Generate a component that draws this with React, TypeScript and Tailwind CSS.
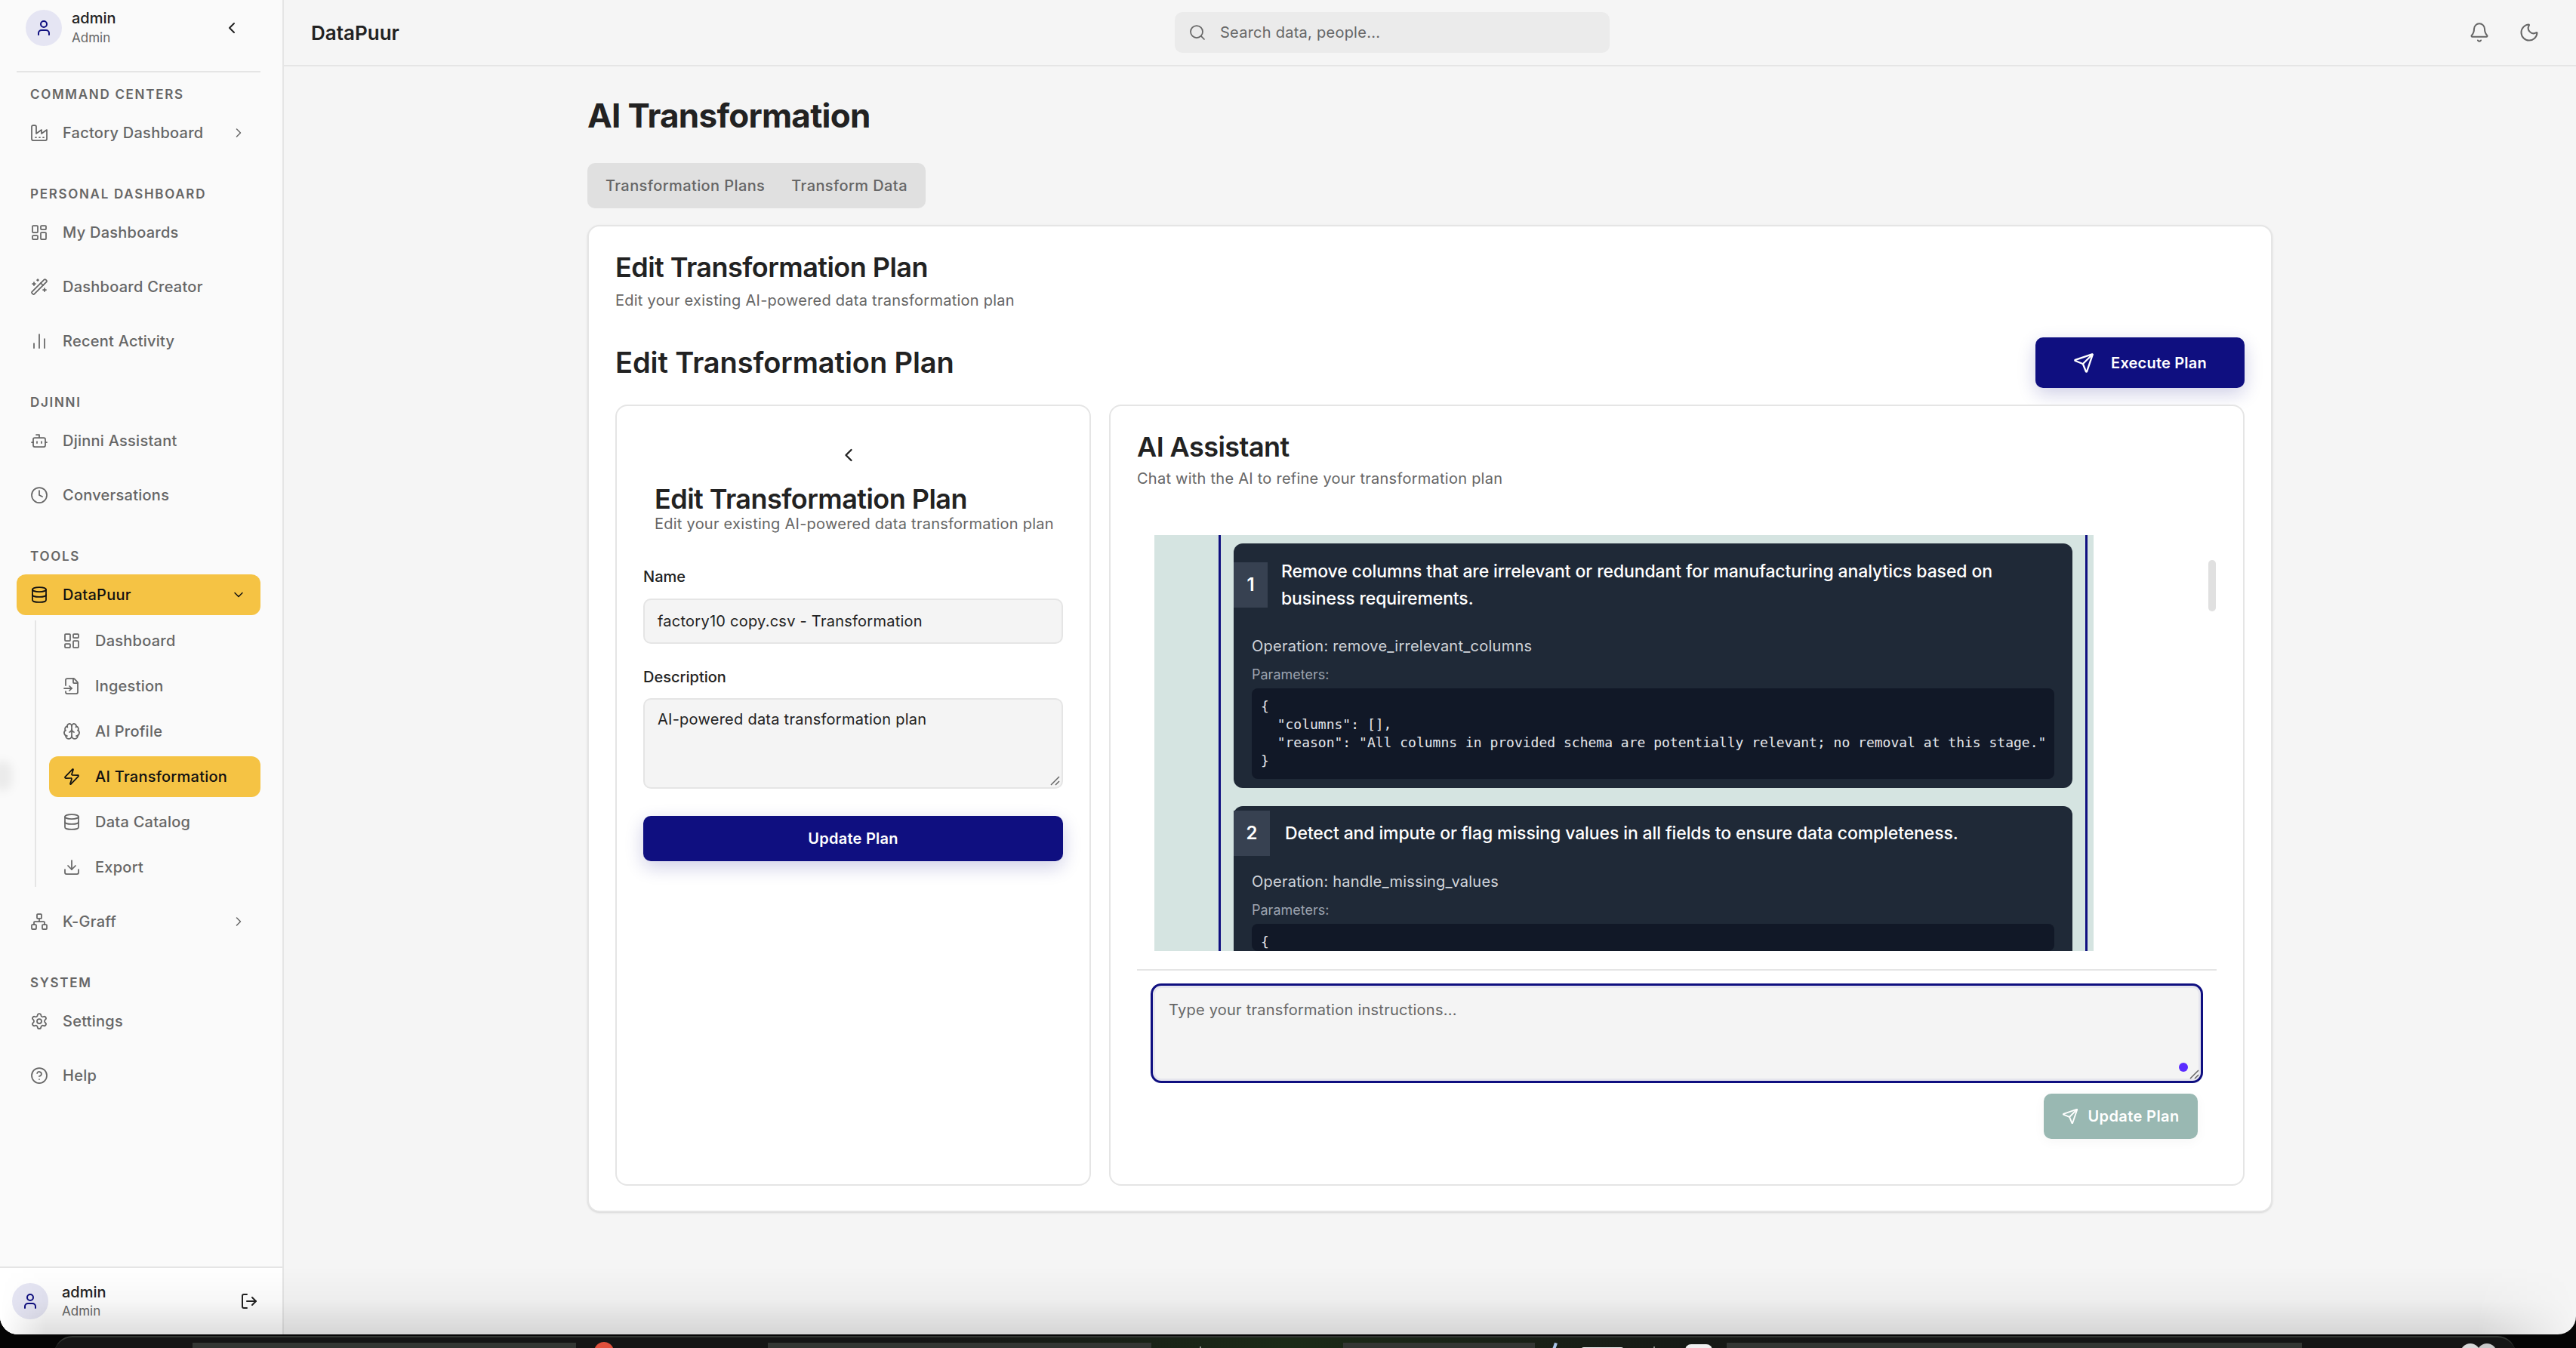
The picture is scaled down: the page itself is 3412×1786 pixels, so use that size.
import type { ElementType } from "react";
import {
  Bell,
  Bot,
  Brain,
  ChartNoAxesColumn,
  ChevronDown,
  ChevronLeft,
  ChevronRight,
  CircleHelp,
  Clock,
  Database,
  Download,
  FileInput,
  LayoutDashboard,
  LogOut,
  Moon,
  Network,
  Search,
  Send,
  Settings,
  User,
  WandSparkles,
  Zap,
} from "lucide-react";

// the zig-zag factory with dashes along the base
function FactoryIcon({ size = 24, strokeWidth = 2, className }: { size?: number; strokeWidth?: number; className?: string }) {
  return (
    <svg
      width={size}
      height={size}
      viewBox="0 0 24 24"
      fill="none"
      stroke="currentColor"
      strokeWidth={strokeWidth}
      strokeLinecap="round"
      strokeLinejoin="round"
      className={className}
    >
      <path d="M2 20a2 2 0 0 0 2 2h16a2 2 0 0 0 2-2V8l-7 5V8l-7 5V4a2 2 0 0 0-2-2H4a2 2 0 0 0-2 2Z" />
      <path d="M17 18h1" />
      <path d="M12 18h1" />
      <path d="M7 18h1" />
    </svg>
  );
}

function Resizer() {
  return (
    <svg className="absolute right-[1px] bottom-[1px]" width="16" height="16" viewBox="0 0 16 16" fill="none" stroke="#666666" strokeWidth="1.5">
      <path d="M14 3 3 14M14 9l-5 5" />
    </svg>
  );
}

function SectionLabel({ children }: { children: string }) {
  return (
    <div className="h-[24px] px-[40px] pt-[3px] flex items-center text-[17px] font-semibold tracking-[0.1em] text-[#666666] uppercase">
      {children}
    </div>
  );
}

function NavItem({
  icon: Icon,
  label,
  chevron,
}: {
  icon: ElementType;
  label: string;
  chevron?: boolean;
}) {
  return (
    <div className="h-[48px] pl-[40px] pr-[48px] flex items-center text-[#666666]">
      <Icon size={24} strokeWidth={1.75} className="shrink-0" />
      <span className="ml-[19px] text-[20px] tracking-[0.0125em] font-medium flex-1">{label}</span>
      {chevron && <ChevronRight size={20} strokeWidth={1.75} />}
    </div>
  );
}

function SubItem({ icon: Icon, label, active }: { icon: ElementType; label: string; active?: boolean }) {
  return (
    <div
      className={`h-[54px] mt-[6px] first:mt-0 pl-[18px] flex items-center rounded-[12px] ${
        active ? "bg-[#f5c344] text-[#111111]" : "text-[#666666]"
      }`}
    >
      <Icon size={24} strokeWidth={1.75} className="shrink-0" />
      <span className="ml-[19px] text-[20px] tracking-[0.0125em] font-medium">{label}</span>
    </div>
  );
}

function Sidebar() {
  return (
    <aside className="w-[376px] shrink-0 bg-[#fafafa] border-r-2 border-[#e5e5e5] flex flex-col">
      <div className="ml-[22px] mr-[29px] h-[96px] pl-[12px] pr-[26px] pb-[20px] flex items-center border-b-2 border-[#e5e5e5]">
        <div className="w-[48px] h-[48px] rounded-full bg-[#e5e5f3] flex items-center justify-center">
          <User size={24} strokeWidth={2} className="text-[#0f0f80]" />
        </div>
        <div className="ml-[13px] flex-1">
          <div className="text-[20px] leading-[26px] font-medium text-[#222222]">admin</div>
          <div className="text-[17px] leading-[26px] text-[#666666]">Admin</div>
        </div>
        <ChevronLeft size={24} strokeWidth={2} className="text-[#222222]" />
      </div>

      <div className="flex-1 pt-[16px]">
        <SectionLabel>Command Centers</SectionLabel>
        <div className="mt-[16px]">
          <NavItem icon={FactoryIcon} label="Factory Dashboard" chevron />
        </div>

        <div className="mt-[44px]">
          <SectionLabel>Personal Dashboard</SectionLabel>
        </div>
        <div className="mt-[16px] flex flex-col gap-[24px]">
          <NavItem icon={LayoutDashboard} label="My Dashboards" />
          <NavItem icon={WandSparkles} label="Dashboard Creator" />
          <NavItem icon={ChartNoAxesColumn} label="Recent Activity" />
        </div>

        <div className="mt-[44px]">
          <SectionLabel>Djinni</SectionLabel>
        </div>
        <div className="mt-[16px] flex flex-col gap-[24px]">
          <NavItem icon={Bot} label="Djinni Assistant" />
          <NavItem icon={Clock} label="Conversations" />
        </div>

        <div className="mt-[44px]">
          <SectionLabel>Tools</SectionLabel>
        </div>
        <div className="ml-[22px] mr-[29px] mt-[13px] h-[54px] pl-[18px] pr-[19px] flex items-center rounded-[12px] bg-[#f5c344] text-[#111111]">
          <Database size={24} strokeWidth={1.75} className="shrink-0" />
          <span className="ml-[19px] text-[20px] tracking-[0.0125em] font-medium flex-1">DataPuur</span>
          <ChevronDown size={20} strokeWidth={1.75} />
        </div>
        <div className="ml-[46px] mr-[29px] mt-[7px] h-[353px] border-l-2 border-[#e5e5e5] pl-[17px]">
          <SubItem icon={LayoutDashboard} label="Dashboard" />
          <SubItem icon={FileInput} label="Ingestion" />
          <SubItem icon={Brain} label="AI Profile" />
          <SubItem icon={Zap} label="AI Transformation" active />
          <SubItem icon={Database} label="Data Catalog" />
          <SubItem icon={Download} label="Export" />
        </div>
        <div className="mt-[22px]">
          <NavItem icon={Network} label="K-Graff" chevron />
        </div>

        <div className="mt-[44px]">
          <SectionLabel>System</SectionLabel>
        </div>
        <div className="mt-[16px] flex flex-col gap-[24px]">
          <NavItem icon={Settings} label="Settings" />
          <NavItem icon={CircleHelp} label="Help" />
        </div>
      </div>

      <div className="h-[90px] border-t-2 border-[#e5e5e5] bg-white pl-[16px] pr-[32px] flex items-center">
        <div className="w-[48px] h-[48px] rounded-full bg-[#e5e5f3] flex items-center justify-center">
          <User size={24} strokeWidth={2} className="text-[#0f0f80]" />
        </div>
        <div className="ml-[18px] flex-1">
          <div className="text-[20px] leading-[26px] font-medium text-[#222222]">admin</div>
          <div className="text-[17px] leading-[24px] text-[#666666]">Admin</div>
        </div>
        <LogOut size={24} strokeWidth={2} className="text-[#222222]" />
      </div>
    </aside>
  );
}

function Header() {
  return (
    <header className="h-[88px] shrink-0 border-b-2 border-[#e5e5e5] pl-[36px] pr-[48px] flex items-center relative">
      <div className="w-[1144px] shrink-0 text-[26px] font-semibold text-[#222222]">DataPuur</div>
      <div className="w-[576px] h-[54px] rounded-[10px] bg-[#ebebeb] pl-[18px] flex items-center text-[#666666]">
        <Search size={24} strokeWidth={1.75} />
        <span className="ml-[18px] text-[20px] tracking-[0.0125em]">Search data, people...</span>
      </div>
      <div className="ml-auto flex items-center gap-[38px] text-[#666666]">
        <Bell size={28} strokeWidth={1.75} />
        <Moon size={28} strokeWidth={1.75} />
      </div>
    </header>
  );
}

function StepCard({
  n,
  title,
  operation,
  code,
  numWidth,
  headerPad,
  codeHeight,
  titleGap,
}: {
  n: number;
  title: string;
  operation: string;
  code: string;
  numWidth: string;
  headerPad: string;
  codeHeight: string;
  titleGap: string;
}) {
  return (
    <div className="rounded-[12px] bg-[#1f2937] px-[24px] pb-[12px] shrink-0">
      <div className={`flex items-center -ml-[24px] ${headerPad}`}>
        <div className={`${numWidth} h-[60px] bg-[#374151] flex items-center justify-center text-[24px] font-semibold text-white shrink-0`}>
          {n}
        </div>
        <div className={`${titleGap} text-[23px] leading-[36px] tracking-[-0.005em] font-medium text-white`}>{title}</div>
      </div>
      <div className="text-[20px] leading-[28px] tracking-[0.0125em] text-[#d1d5db]">Operation: {operation}</div>
      <div className="mt-[12px] text-[18px] leading-[24px] text-[#9ca3af]">Parameters:</div>
      <pre className={`mt-[6px] rounded-[8px] bg-[#111827] p-[12px] text-[18px] leading-[24px] text-[#e5e7eb] font-['DejaVu_Sans_Mono',monospace] ${codeHeight}`}>
        {code}
      </pre>
    </div>
  );
}

function ChatPanel() {
  return (
    <div className="ml-[24px] flex-1 rounded-[16px] border-2 border-[#e5e5e5] bg-white flex flex-col">
      <div className="pl-[35px] pt-[31px]">
        <div className="text-[36px] leading-[46px] font-semibold tracking-[-0.015em] text-[#222222]">AI Assistant</div>
        <div className="mt-[5px] text-[20px] leading-[28px] tracking-[0.0125em] text-[#666666]">Chat with the AI to refine your transformation plan</div>
      </div>

      <div className="mt-[61px] pl-[58px] pr-[36px] flex relative">
        <div className="w-[1244px] h-[551px] overflow-hidden bg-[#d5e4e1] pl-[85px] pr-[8px]">
          <div className="h-full border-x-[3px] border-[#0f0f80] pl-[17px] pr-[17px] pt-[11px] flex flex-col gap-[24px]">
            <StepCard
              n={1}
              numWidth="w-[45px]"
              titleGap="ml-[18px]"
              headerPad="pt-[19px] pb-[31px]"
              codeHeight=""
              title="Remove columns that are irrelevant or redundant for manufacturing analytics based on business requirements."
              operation="remove_irrelevant_columns"
              code={`{\n  "columns": [],\n  "reason": "All columns in provided schema are potentially relevant; no removal at this stage."\n}`}
            />
            <StepCard
              n={2}
              numWidth="w-[48px]"
              titleGap="ml-[20px]"
              headerPad="pt-[6px] pb-[20px]"
              codeHeight="h-[36px]"
              title="Detect and impute or flag missing values in all fields to ensure data completeness."
              operation="handle_missing_values"
              code="{"
            />
          </div>
        </div>
        {/* scrollbar thumb */}
        <div className="ml-auto mt-[33px] w-[10px] h-[68px] rounded-full bg-[#e0e0e0]" />
      </div>

      <div className="mt-[24px] mx-[35px] border-t-2 border-[#e5e5e5]" />

      <div className="mt-[17px] ml-[53px] mr-[53px] h-[132px] rounded-[14px] border-[3px] border-[#0f0f80] bg-[#f4f4f4] shadow-[inset_0_0_0_3px_#e6e6ee] relative pl-[21px] pt-[18px] text-[20px] leading-[28px] tracking-[0.0125em] text-[#666666]">
        Type your transformation instructions...
        <div className="absolute right-[17px] bottom-[12px] w-[12px] h-[12px] rounded-full bg-[#5b2cff]" />
        <Resizer />
      </div>

      <div className="mt-[14px] mr-[60px] flex justify-end">
        <div className="w-[204px] h-[60px] rounded-[10px] bg-[#99b8b2] flex items-center justify-center gap-[12px] text-white shadow-[0_4px_16px_rgba(0,0,0,0.04)]">
          <Send size={22} strokeWidth={2} />
          <span className="text-[20px] tracking-[0.02em] font-semibold">Update Plan</span>
        </div>
      </div>
    </div>
  );
}

function PlanForm() {
  return (
    <div className="w-[630px] shrink-0 rounded-[16px] border-2 border-[#e5e5e5] bg-white px-[35px]">
      <div className="flex justify-center pt-[51px] pr-[12px]">
        <ChevronLeft size={28} strokeWidth={2} className="text-[#222222]" />
      </div>
      <div className="pl-[15px] mt-[21px]">
        <div className="text-[36px] leading-[46px] font-semibold tracking-[-0.015em] text-[#222222]">Edit Transformation Plan</div>
        <div className="-mt-[4px] text-[20px] leading-[28px] tracking-[0.0125em] text-[#666666]">Edit your existing AI-powered data transformation plan</div>
      </div>
      <div className="mt-[42px] text-[20px] leading-[28px] font-medium text-[#222222]">Name</div>
      <div className="mt-[15px] h-[60px] rounded-[10px] border-2 border-[#e5e5e5] bg-[#f4f4f4] px-[17px] flex items-center text-[20px] tracking-[0.0125em] text-[#222222]">
        factory10 copy.csv - Transformation
      </div>
      <div className="mt-[30px] text-[20px] leading-[28px] font-medium text-[#222222]">Description</div>
      <div className="mt-[14px] h-[120px] rounded-[10px] border-2 border-[#e5e5e5] bg-[#f4f4f4] px-[17px] pt-[12px] text-[20px] leading-[28px] tracking-[0.0125em] text-[#222222] relative">
        AI-powered data transformation plan
        <Resizer />
      </div>
      <div className="mt-[36px] h-[60px] rounded-[10px] bg-[#0f0f80] flex items-center justify-center text-[20px] tracking-[0.0125em] font-semibold text-white shadow-[0_8px_24px_rgba(15,15,128,0.2)]">
        Update Plan
      </div>
    </div>
  );
}

function Dock() {
  return (
    <div className="h-[18px] shrink-0 bg-[#050505] pl-[72px] pr-[80px] pt-[2px] overflow-hidden">
      <div className="h-[40px] rounded-t-[24px] border-t-2 border-[#333633] bg-gradient-to-r from-[#151515] from-[35%] via-[#1b2a17] to-[#151515] to-[72%] relative">
        <div className="absolute left-[715px] top-[6px] w-[26px] h-[26px] rounded-full bg-[#e0503c]" />
        <div className="absolute left-[1517px] top-[12px] w-[2px] h-[8px] bg-[#8a8f8a]" />
        <div className="absolute left-[1985px] top-[7px] w-[4px] h-[12px] rotate-[20deg] bg-[#a9c4e8]" />
        <div className="absolute left-[2022px] top-[13px] w-[57px] h-[8px] rounded-t-[4px] bg-[#f0f0f0]" />
        <div className="absolute left-[2118px] top-[12px] w-[2px] h-[8px] bg-[#8a8f8a]" />
        <div className="absolute left-[2160px] top-[9px] w-[36px] h-[20px] rounded-t-[8px] bg-[#f0f0f0]" />
        <div className="absolute left-[3187px] top-[8px] w-[26px] h-[26px] rounded-full bg-[#d8d8d8]" />
        <div className="absolute left-[3209px] top-[8px] w-[26px] h-[26px] rounded-full bg-[#c8c8c8]" />
      </div>
    </div>
  );
}

export default function App() {
  return (
    <div className="w-[3412px] h-[1786px] flex flex-col bg-[#050505] overflow-hidden font-['Inter',sans-serif]">
      <div className="h-[1768px] shrink-0 rounded-b-[24px] overflow-hidden flex bg-[#f5f5f5] relative">
        <Sidebar />
        <main className="flex-1 flex flex-col min-w-0">
          <Header />
          <div className="pl-[402px] pr-[402px]">
            <h1 className="mt-[36px] text-[44px] leading-[58px] font-bold tracking-[-0.017em] text-[#222222]">AI Transformation</h1>
            <div className="mt-[34px] w-[448px] h-[60px] rounded-[10px] bg-[#e0e0e0] pl-[24px] flex items-center gap-[35px] text-[20px] tracking-[0.02em] font-medium text-[#666666]">
              <span>Transformation Plans</span>
              <span>Transform Data</span>
            </div>
            <section className="mt-[22px] h-[1308px] rounded-[16px] border-2 border-[#e5e5e5] bg-white shadow-sm pl-[35px] pr-[35px] flex flex-col">
              <div className="pt-[30px]">
                <div className="text-[36px] leading-[48px] font-semibold tracking-[-0.015em] text-[#222222]">Edit Transformation Plan</div>
                <div className="mt-[6px] text-[20px] leading-[28px] tracking-[0.0125em] text-[#666666]">Edit your existing AI-powered data transformation plan</div>
              </div>
              <div className="mt-[35px] flex items-center justify-between h-[67px]">
                <div className="text-[38px] font-semibold tracking-[-0.002em] text-[#222222]">Edit Transformation Plan</div>
                <div className="w-[277px] h-[67px] rounded-[10px] bg-[#0f0f80] flex items-center justify-center gap-[22px] text-white shadow-[0_8px_24px_rgba(15,15,128,0.2)]">
                  <Send size={28} strokeWidth={2} />
                  <span className="text-[20px] tracking-[0.01em] font-semibold">Execute Plan</span>
                </div>
              </div>
              <div className="mt-[22px] h-[1035px] flex">
                <PlanForm />
                <ChatPanel />
              </div>
            </section>
          </div>
        </main>
        {/* window edge shade */}
        <div className="absolute inset-x-0 bottom-0 h-[90px] bg-gradient-to-b from-black/0 via-black/[0.03] to-black/[0.13] [mask-image:linear-gradient(to_right,transparent,black_60px,black_calc(100%-130px),transparent)] pointer-events-none" />
        <div className="absolute -left-[10px] top-[1008px] w-[26px] h-[40px] rounded-full bg-black/[0.06] blur-[6px] pointer-events-none" />
      </div>
      <Dock />
    </div>
  );
}
